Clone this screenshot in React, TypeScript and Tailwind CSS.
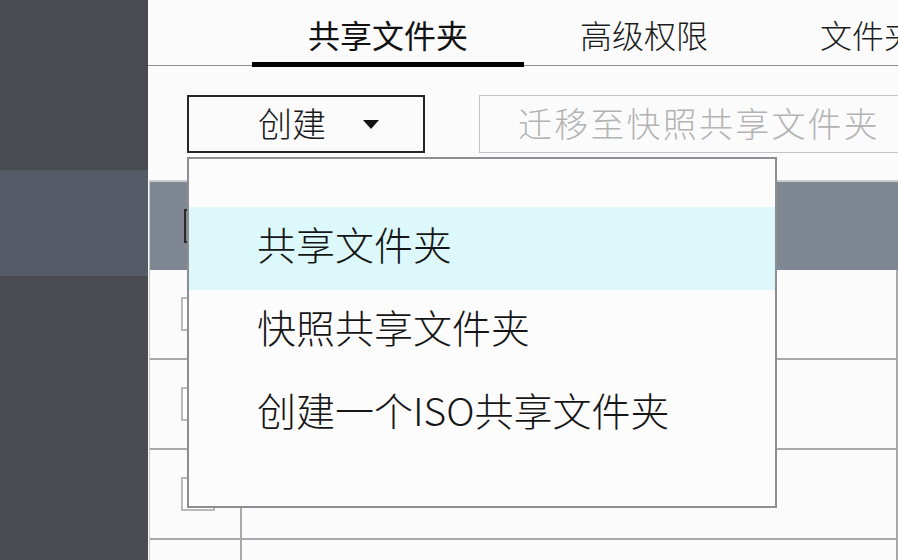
import React from 'react';

const font = { fontFamily: '"Noto Sans CJK SC", "Noto Sans", sans-serif' };

const Tab: React.FC<{ label: string; active?: boolean }> = ({ label, active }) => (
  <div
    className={
      'px-[56px] pt-[14px] text-[32px] leading-[40px] ' +
      (active ? 'border-b-[5px] border-black -mb-[2px] font-normal text-[#111]' : 'font-light text-[#1c1c1c]')
    }
  >
    {label}
  </div>
);

const Checkbox: React.FC<{ dark?: boolean }> = ({ dark }) => (
  <div
    className={
      'w-[34px] h-[34px] border-2 ' + (dark ? 'border-[#2a2a2a]' : 'border-[#b9b9b9] bg-white')
    }
  />
);

const TableRow: React.FC = () => (
  <div className="flex shrink-0 h-[90px] border-b-2 border-[#a9a9ab]">
    <div className="w-[92px] flex items-center pl-[31px] border-r-2 border-[#a9a9ab]">
      <Checkbox />
    </div>
    <div className="flex-1 border-r-2 border-[#a9a9ab]" />
  </div>
);

const menuItems = ['共享文件夹', '快照共享文件夹', '创建一个ISO共享文件夹'];

export default function App() {
  return (
    <div className="flex w-[898px] h-[560px] overflow-hidden bg-[#fbfbfc]" style={font}>
      {/* sidebar */}
      <div className="w-[148px] shrink-0 bg-[#4a4b50] flex flex-col">
        <div className="h-[170px] shrink-0" />
        <div className="h-[106px] shrink-0 bg-[#565c67]" />
      </div>

      {/* main */}
      <div className="relative flex-1 flex flex-col overflow-hidden">
        <div className="flex shrink-0 h-[66px] border-b border-[#8c8c8c] pl-[104px] whitespace-nowrap">
          <Tab label="共享文件夹" active />
          <Tab label="高级权限" />
          <Tab label="文件夹" />
        </div>

        <div className="flex shrink-0 mt-[29px] pl-[39px] whitespace-nowrap">
          <div className="w-[238px] h-[58px] shrink-0 border-2 border-[#262626] flex items-center pl-[69px] pb-[3px] text-[34px] font-light text-[#1a1a1a]">
            <span className="leading-none">创建</span>
            <svg className="ml-[37px] mt-[4px]" width="16" height="9" viewBox="0 0 16 9">
              <path d="M0 0 L16 0 L8 9 Z" fill="#111" />
            </svg>
          </div>
          <div className="ml-[54px] w-[440px] h-[58px] shrink-0 border border-[#c4c4c6] flex items-center pl-[38px] pb-[2px] text-[34px] tracking-[2.2px] font-light text-[#b3b3b5]">
            <span className="leading-none">迁移至快照共享文件夹</span>
          </div>
        </div>

        {/* table */}
        <div className="shrink-0 mt-[27px] ml-[1px] border-l border-[#c8c8ca]">
          <div className="h-[90px] bg-[#7f8793] border-t-2 border-[#c9cbd0] flex items-center pl-[34px]">
            <Checkbox dark />
          </div>
          <TableRow />
          <TableRow />
          <TableRow />
          <TableRow />
        </div>

        {/* dropdown menu */}
        <div className="absolute left-[39px] top-[157px] w-[590px] h-[351px] border-2 border-[#8e8e90] bg-[#fdfcfd] pt-[48px]">
          {menuItems.map((item, i) => (
            <div
              key={item}
              className={
                'h-[83px] flex items-center pl-[68px] pb-[10px] text-[39px] font-light text-[#151515] whitespace-nowrap ' +
                (i === 0 ? 'bg-[#dcf8fb]' : '')
              }
            >
              {item}
            </div>
          ))}
        </div>
      </div>
    </div>
  );
}
